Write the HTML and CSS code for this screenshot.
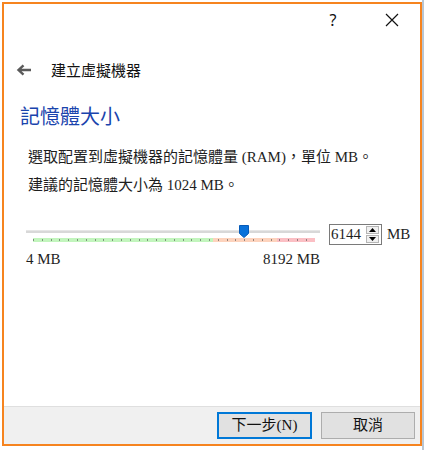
FILE: index.html
```html
<!DOCTYPE html>
<html lang="zh-Hant">
<head>
<meta charset="utf-8">
<title>建立虛擬機器</title>
<link rel="stylesheet" href="styles.css">
</head>
<body>
<div class="window">
  <div class="titlebar">
    <span class="tb-btn help">?</span>
    <span class="tb-btn close">
      <svg width="14" height="14" viewBox="0 0 14 14"><path d="M1 1L13 13M13 1L1 13" stroke="#111" stroke-width="1.2" fill="none"/></svg>
    </span>
  </div>
  <div class="header">
    <svg class="back" width="16" height="12" viewBox="0 0 16 12"><path d="M15 6H3M7.5 1.3L2.5 6l5 4.7" stroke="#5a5a5a" stroke-width="2.4" fill="none"/></svg>
    <span class="header-text">建立虛擬機器</span>
  </div>
  <h1 class="main-title">記憶體大小</h1>
  <div class="desc">
    <p>選取配置到虛擬機器的記憶體量 (RAM)，單位 MB。</p>
    <p>建議的記憶體大小為 1024 MB。</p>
  </div>
  <div class="slider-row">
    <div class="slider">
      <div class="track"></div>
      <div class="ticks">
        <span class="seg green"></span>
        <span class="seg orange"></span>
        <span class="seg red"></span>
      </div>
      <svg class="thumb" width="10" height="13" viewBox="0 0 10 13"><path d="M0.5 0.5h9v8l-4.5 4l-4.5-4z" fill="#0a72da" stroke="#075bb8" stroke-width="1"/></svg>
    </div>
    <div class="spin">
      <span class="spin-val">6144</span>
      <span class="spin-btns">
        <span class="sb up"><svg width="7" height="4" viewBox="0 0 7 4"><path d="M0 4L3.5 0L7 4z" fill="#000"/></svg></span>
        <span class="sb down"><svg width="7" height="4" viewBox="0 0 7 4"><path d="M0 0L3.5 4L7 0z" fill="#000"/></svg></span>
      </span>
    </div>
    <span class="unit">MB</span>
  </div>
  <div class="labels">
    <span>4 MB</span>
    <span>8192 MB</span>
  </div>
  <div class="footer">
    <button class="btn primary">下一步(N)</button>
    <button class="btn">取消</button>
  </div>
</div>
</body>
</html>
```
FILE: styles.css
```css
html, body {
  margin: 0;
  padding: 0;
}
body {
  width: 424px;
  height: 450px;
  background: linear-gradient(to right, #ffffff 0, #ffffff 422px, #b9c6d3 422px);
  font-family: "Liberation Serif", "Noto Sans CJK TC", serif;
  color: #1e1e1e;
  overflow: hidden;
}
.window {
  box-sizing: border-box;
  margin: 2px 0 0 2px;
  width: 420px;
  height: 444px;
  border: 2px solid #f6841f;
  background: #fff;
  display: flex;
  flex-direction: column;
}
.titlebar {
  height: 32px;
  display: flex;
  justify-content: flex-end;
  align-items: center;
}
.tb-btn {
  display: flex;
  justify-content: center;
  align-items: center;
  height: 32px;
}
.help {
  width: 62px;
  font-family: "Noto Sans", sans-serif;
  font-size: 16px;
  color: #111;
}
.close {
  width: 56px;
}
.header {
  margin-top: 24px;
  height: 20px;
  display: flex;
  align-items: center;
  padding-left: 12px;
}
.back {
  display: block;
}
.header-text {
  margin-left: 19px;
  font-family: "Noto Sans CJK TC", sans-serif;
  font-size: 15px;
  line-height: 20px;
  color: #111;
}
.main-title {
  margin: 22px 0 0 16px;
  font-family: "Noto Sans CJK TC", sans-serif;
  font-weight: normal;
  font-size: 20px;
  line-height: 28px;
  color: #1a44ad;
}
.desc {
  margin: 13px 0 0 24px;
}
.desc p {
  margin: 0;
  font-size: 15px;
  line-height: 28px;
}
.slider-row {
  margin: 25px 0 0 22px;
  display: flex;
  align-items: flex-start;
  height: 21px;
}
.slider {
  position: relative;
  width: 294px;
  height: 21px;
}
.track {
  margin-top: 6px;
  height: 2px;
  background: #d8d8d8;
  border-top: 1px solid #e6e6e6;
}
.ticks {
  position: relative;
  margin: 5px 5px 0 7px;
  height: 4px;
  display: flex;
}
.ticks::after {
  content: "";
  position: absolute;
  left: 0;
  right: 0;
  top: 1px;
  height: 2px;
  background: repeating-linear-gradient(to right, rgba(80,80,80,0.6) 0, rgba(80,80,80,0.6) 1px, transparent 1px, transparent 8.8px);
}
.seg {
  display: block;
  height: 4px;
}
.green { width: 180px; background: #c2f5bd; }
.orange { width: 64px; background: #fdd3bd; }
.red { flex: 1; background: #fbbfc4; }
.thumb {
  position: absolute;
  left: 213px;
  top: 1px;
}
.spin {
  margin-left: 9px;
  box-sizing: border-box;
  width: 53px;
  height: 21px;
  border: 1px solid #7a7a7a;
  display: flex;
  align-items: center;
  background: #fff;
}
.spin-val {
  flex: 1;
  padding-left: 1px;
  font-size: 15px;
  line-height: 19px;
}
.spin-btns {
  display: flex;
  flex-direction: column;
  width: 13px;
  height: 17px;
  margin-right: 2px;
  gap: 1px;
}
.sb {
  flex: 1;
  display: flex;
  justify-content: center;
  align-items: center;
  background: #f0f0f0;
  border: 1px solid #b5b5b5;
}
.unit {
  margin-left: 5px;
  font-size: 15px;
  line-height: 21px;
}
.labels {
  margin: 4px 0 0 22px;
  width: 294px;
  display: flex;
  justify-content: space-between;
  font-size: 15px;
  line-height: 20px;
}
.footer {
  margin-top: auto;
  height: 38px;
  box-sizing: border-box;
  border-top: 1px solid #dfdfdf;
  background: #f0f0f0;
  display: flex;
  justify-content: flex-end;
  align-items: flex-start;
  padding: 5px 5px 0 0;
  gap: 9px;
}
.btn {
  box-sizing: border-box;
  width: 94px;
  height: 27px;
  border: 1px solid #adadad;
  background: #e1e1e1;
  font-family: "Liberation Serif", "Noto Sans CJK TC", serif;
  font-size: 15px;
  color: #111;
  padding: 0;
  line-height: 25px;
}
.btn.primary {
  width: 95px;
  border: 2px solid #0078d7;
  line-height: 23px;
}
```
